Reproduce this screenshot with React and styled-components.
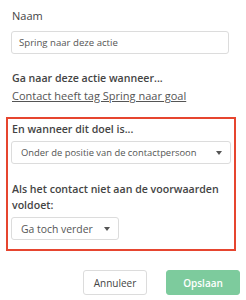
import React from "react";
import styled, { createGlobalStyle } from "styled-components";

const GlobalStyle = createGlobalStyle`
  html, body {
    margin: 0;
    padding: 0;
    background: #fff;
  }
  body {
    font-family: "Open Sans", "Liberation Sans", sans-serif;
    color: #444;
  }
`;

const Page = styled.div`
  width: 246px;
  height: 300px;
  box-sizing: border-box;
  padding-top: 8px;
  display: flex;
  flex-direction: column;
`;

const Section = styled.div`
  display: flex;
  flex-direction: column;
  padding: 0 17px 0 11px;
`;

const Label = styled.div`
  font-size: ${props => (props.bold ? 10.6 : 11)}px;
  line-height: 16px;
  font-weight: ${props => (props.bold ? 600 : 400)};
  color: #444;
  padding-left: 1px;
  margin-top: ${props => props.top || 0}px;
`;

const Link = styled.a`
  font-size: 11px;
  line-height: 16px;
  color: #555;
  text-decoration: underline;
  padding-left: 1px;
  margin-top: 2px;
  cursor: pointer;
`;

const Input = styled.div`
  box-sizing: border-box;
  height: 23px;
  margin-top: 7px;
  border: 1px solid #dcdcdc;
  border-radius: 3px;
  padding: 0 7px;
  display: flex;
  align-items: center;
  font-size: 9.6px;
  color: #555;
`;

const Highlight = styled.div`
  margin: 13px 10px 0 6px;
  border: 2px solid #e6452f;
  padding: 2px 3px 9px 3px;
  display: flex;
  flex-direction: column;
`;

const Select = styled.div`
  box-sizing: border-box;
  width: ${props => props.width || "100%"};
  height: 23px;
  margin-top: 4px;
  border: 1px solid #dcdcdc;
  border-radius: 3px;
  padding: 0 8px 0 9px;
  display: flex;
  align-items: center;
  justify-content: space-between;
  font-size: ${props => props.size || 9.4}px;
  color: #555;
`;

const Caret = styled.span`
  width: 0;
  height: 0;
  border-left: 3.5px solid transparent;
  border-right: 3.5px solid transparent;
  border-top: 4px solid #555;
`;

const Footer = styled.div`
  display: flex;
  justify-content: flex-end;
  gap: 19px;
  margin-top: 19px;
  padding-right: 6px;
`;

const Button = styled.button`
  box-sizing: border-box;
  width: ${props => props.width}px;
  height: 25px;
  padding: 0;
  border-radius: 3px;
  border: 1px solid ${props => (props.primary ? "#7dcb9d" : "#dcdcdc")};
  background: ${props => (props.primary ? "#7dcb9d" : "#fff")};
  color: ${props => (props.primary ? "#fff" : "#444")};
  font-family: "Open Sans", "Liberation Sans", sans-serif;
  font-size: 10px;
  font-weight: ${props => (props.primary ? 600 : 400)};
`;

const App = () => {
  return (
    <>
      <GlobalStyle />
      <Page>
        <Section>
          <Label>Naam</Label>
          <Input>Spring naar deze actie</Input>
          <Label bold top={16}>Ga naar deze actie wanneer...</Label>
          <Link>Contact heeft tag Spring naar goal</Link>
        </Section>

        <Highlight>
          <Label bold>En wanneer dit doel is...</Label>
          <Select>
            Onder de positie van de contactpersoon
            <Caret />
          </Select>
          <Label bold top={17}>
            Als het contact niet aan de voorwaarden voldoet:
          </Label>
          <Select width="108px" size={10.4}>
            Ga toch verder
            <Caret />
          </Select>
        </Highlight>

        <Footer>
          <Button width={64}>Annuleer</Button>
          <Button primary width={74}>Opslaan</Button>
        </Footer>
      </Page>
    </>
  );
};

export default App;
